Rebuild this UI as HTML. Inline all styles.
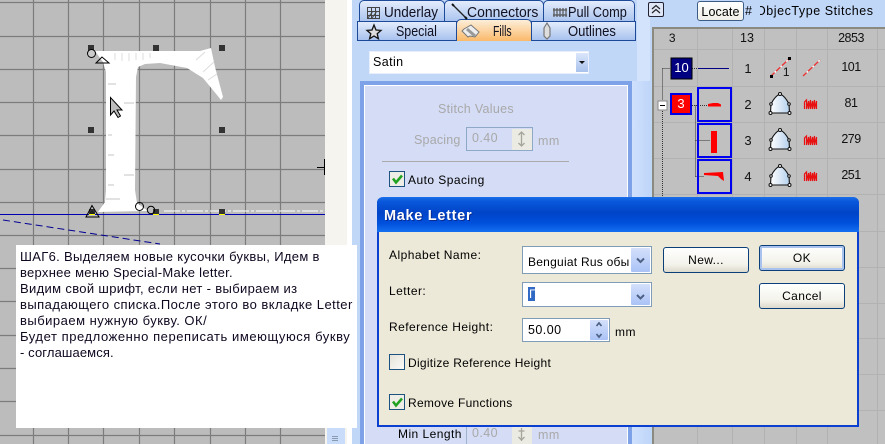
<!DOCTYPE html>
<html><head><meta charset="utf-8">
<style>
html,body{margin:0;padding:0}
body{width:885px;height:444px;overflow:hidden;position:relative;background:#c1d7f8;font-family:"Liberation Sans",sans-serif;font-size:12px;color:#111}
div,span{position:absolute;box-sizing:border-box;white-space:nowrap}
svg{position:absolute;left:0;top:0}
.tab{background:linear-gradient(#e3ecfc,#a8c2ee);border:1px solid #1d4a98;border-bottom:none;border-radius:5px 5px 0 0;font-size:15px;line-height:20px;color:#101020}
.tab span{transform-origin:0 50%}
.l{font-size:12px;letter-spacing:.45px;color:#000;line-height:14px}
.btn{background:linear-gradient(#fff,#f3f2ea 70%,#dcd9cc);border:1px solid #0a3f7a;border-radius:3px;text-align:center;font-size:12px;letter-spacing:.4px;line-height:24px;color:#000}
.box{background:#fff;border:1px solid #7f9db9}
.arr{background:linear-gradient(#d4e0fb,#aac3f6);border-radius:1px}
.dis{color:#a9a9a9;font-size:12px;letter-spacing:.4px}
.g{font-size:12px;letter-spacing:-.5px;color:#111;text-align:center;line-height:14px}
.n{left:20px;font-size:13px;line-height:16px;color:#100820;z-index:7}
</style></head><body>

<!-- left canvas -->
<div style="left:0;top:0;width:325px;height:444px;background:#bcbcbc"></div>
<div style="left:325px;top:0;width:22px;height:444px;background:#f6f4ef"></div>
<div style="left:347px;top:0;width:5px;height:444px;background:#fff"></div>
<div style="left:327px;top:427px;width:18px;height:17px;background:#c9dcfa"></div>
<svg width="885" height="444"><path d="M332 436.500h6M332 438.500h6M332 440.500h6" stroke="#8a9ab0"/></svg>

<svg width="885" height="444" style="z-index:1">
<g stroke="#7c7c7c" stroke-width="1.200">
<path d="M33.500 0V444M68.500 0V444M103.500 0V444M139.500 0V444M174.500 0V444M210.500 0V444M245.500 0V444M280.500 0V444"/>
<path d="M0 2.500H325M0 36.500H325M0 69.500H325M0 102.500H325M0 135.500H325M0 169.500H325M0 202.500H325M0 235.500H325M0 268.500H325M0 301.500H325M0 335.500H325M0 368.500H325M0 401.500H325M0 435.500H325"/>
</g>
<!-- letter -->
<path d="M95 51L200 51L211 48L215 67L223 97L221 100L217 95L203 78L187 68L160 63L145 64L138 67L136 77L135 190L137 203L148 211L98 212L105 202L106 190L106 72L103 62Z" fill="#fff"/>
<path d="M115 53V60M122 53V61M129 53V61M136 53V60M143 53V60M150 53V58M196 60L205 52M203 72L214 62M208 80L217 74" stroke="#dcdcdc" stroke-width="1" fill="none"/>
<path d="M108 84H116M124 103H134M108 135H112M108 155H114M124 175H134M108 185H114M106 199H120" stroke="#c4c4c4" stroke-width="1" fill="none"/>
<path d="M164 211H325" stroke="#fff" stroke-width="1" stroke-dasharray="16 2 3 2"/>
<path d="M0 214.500H325" stroke="#0000b0" stroke-width="1"/>
<path d="M3 220L160 244" stroke="#000090" stroke-width="1" stroke-dasharray="7 4"/>
<g fill="#333">
<rect x="88" y="45" width="6" height="6"/><rect x="153" y="45" width="6" height="6"/><rect x="219" y="45" width="6" height="6"/>
<rect x="88" y="127" width="6" height="6"/><rect x="219" y="127" width="6" height="6"/>
<rect x="153" y="209" width="6" height="5"/><rect x="219" y="209" width="6" height="5"/><rect x="89" y="209" width="6" height="5"/>
</g>
<path d="M89 214.500h6M153 214.500h6M219 214.500h6" stroke="#ff0" stroke-width="1"/>
<circle cx="91.500" cy="53.500" r="4" fill="#ccc" stroke="#000"/>
<circle cx="139.500" cy="206.500" r="4" fill="none" stroke="#000"/>
<circle cx="151" cy="210" r="3.700" fill="none" stroke="#000"/>
<path d="M102 57L96 63H109Z" fill="none" stroke="#000"/>
<path d="M92 205.500L86 217H99Z" fill="none" stroke="#000"/>
<path d="M92 209L89 214H95Z" fill="#222"/>
<path d="M110.500 97.500V115L114 111L118 117.500L120.500 116L117 110H122Z" fill="#bcbcbc" stroke="#000"/>
<path d="M317 167.500H324.500M324.500 159V175" stroke="#000" fill="none"/>
</svg>

<!-- tabs -->
<div class="tab" style="left:359px;top:0;width:86px;height:22px;z-index:2"><span style="left:24px;top:2px;transform:scaleX(.9)">Underlay</span></div>
<div class="tab" style="left:444px;top:0;width:100px;height:22px;z-index:2"><span style="left:22px;top:2px;transform:scaleX(.93)">Connectors</span></div>
<div class="tab" style="left:543px;top:0;width:92px;height:22px;z-index:2"><span style="left:24px;top:2px;transform:scaleX(.85)">Pull Comp</span></div>
<div class="tab" style="left:357px;top:21px;width:100px;height:20px;z-index:3;border-radius:0;border-bottom:1px solid #1d4a98"><span style="left:38px;top:0;transform:scaleX(.83)">Special</span></div>
<div class="tab" style="left:456px;top:19px;width:76px;height:22px;z-index:4;background:linear-gradient(#fdeeda,#fab969)"><span style="left:36px;top:2px;transform:scaleX(.7)">Fills</span></div>
<div class="tab" style="left:531px;top:21px;width:105px;height:20px;z-index:3;border-radius:0;border-bottom:1px solid #1d4a98"><span style="left:36px;top:0;transform:scaleX(.87)">Outlines</span></div>
<svg width="885" height="444" style="z-index:5">
<path d="M367.500 7.500h12v11h-12zM367.500 11.500h12M367.500 15.500h12M371.500 7.500v11M375.500 7.500v11M368 18l5-7M372 18l5-7" fill="none" stroke="#444" stroke-width="1"/>
<path d="M454 6L466 18" stroke="#222" stroke-width="1.300"/><path d="M452 4l2 2M465 17l2 2" stroke="#111" stroke-width="2"/>
<path d="M553 10h14M553 15h14M554 8v9M557 8v9M560 8v9M563 8v9M566 8v9" stroke="#555" stroke-width="1.200" fill="none"/>
<path d="M374 25l2 5 5 .4-3.800 3.300 1.200 5-4.400-2.700-4.400 2.700 1.200-5-3.800-3.300 5-.4z" fill="#ddd" stroke="#111" stroke-width="1.300"/>
<path d="M464 29l7-4 8 7-4 5-5-1-2 1-6-6z" fill="#eee" stroke="#777"/>
<path d="M467 29l8 7" stroke="#999" stroke-width="3"/>
<path d="M544 28l3-5 3 5v8l-3 3-3-3z" fill="#ddd" stroke="#777" stroke-width="1.200"/>
</svg>

<!-- dropdown -->
<div style="left:369px;top:51px;width:220px;height:23px;background:#fff;border:1px solid #e8eefc;padding-left:3px;line-height:21px;font-size:12.500px;letter-spacing:.4px;color:#000">Satin</div>
<div style="left:576px;top:53px;width:12px;height:19px;background:linear-gradient(#dbe6fb,#a9c2ec)"></div>
<div style="left:579px;top:61px;width:0;height:0;border:3px solid transparent;border-top:3px solid #111;border-bottom:0"></div>

<!-- panel -->
<div style="left:360px;top:81px;width:272px;height:363px;background:#d5dcf5;border:4px solid #7ea2e8;border-bottom:none"></div>
<div style="left:364px;top:85px;width:264px;height:359px;border:1px solid #fff;border-bottom:none"></div>
<div class="dis" style="left:438px;top:102px;font-size:12.500px;letter-spacing:.3px">Stitch Values</div>
<div class="dis" style="left:414px;top:133px;font-size:12.500px;letter-spacing:.2px">Spacing</div>
<div style="left:466px;top:127px;width:67px;height:24px;border:1px solid #8ea8c8;background:#d5dcf5"></div>
<div class="dis" style="left:472px;top:131px;font-size:12.500px">0.40</div>
<div style="left:512px;top:129px;width:20px;height:21px;background:#ecebe3"></div>
<div class="dis" style="left:538px;top:134px;font-size:12.500px">mm</div>
<svg width="885" height="444" style="z-index:1"><path d="M521.500 132v14M518.500 135l3-3 3 3M518.500 143l3 3 3-3" fill="none" stroke="#a5a59b" stroke-width="1.300"/></svg>
<div style="left:382px;top:161px;width:187px;height:1px;background:#aaa"></div>
<div style="left:389px;top:171px;width:16px;height:16px;background:#eeeee6;border:1px solid #1c5180"></div>
<svg width="885" height="444" style="z-index:1"><path d="M393 178.500l3 4 6-7" fill="none" stroke="#21a121" stroke-width="2.500"/></svg>
<div class="l" style="left:408px;top:173px">Auto Spacing</div>
<div class="l" style="left:398px;top:427px;z-index:1">Min Length</div>
<div style="left:466px;top:427px;width:1px;height:17px;background:#9fb3cf"></div>
<div class="dis" style="left:472px;top:426px;font-size:12.500px;z-index:1">0.40</div>
<div style="left:512px;top:427px;width:20px;height:17px;background:#ecebe3"></div>
<div class="dis" style="left:538px;top:428px;font-size:12.500px;z-index:1">mm</div>
<svg width="885" height="444" style="z-index:1"><path d="M521.500 428v13M518.500 431h6M518.500 437l3 3 3-3" fill="none" stroke="#a5a59b" stroke-width="1.300"/></svg>

<!-- right strip -->
<div style="left:632px;top:81px;width:18px;height:363px;background:linear-gradient(90deg,#cfe0fc,#bfd6f9)"></div>
<div style="left:637px;top:0;width:13px;height:81px;background:#d4e3fc"></div>
<div style="left:648px;top:2px;width:16px;height:15px;background:#dfe6f6;border:1px solid #223;border-radius:2px"></div>
<svg width="885" height="444" style="z-index:1"><path d="M652 9l4-3.500 4 3.500M652 13l4-3.500 4 3.500" fill="none" stroke="#222" stroke-width="1.200"/></svg>
<div class="btn" style="left:697px;top:1px;width:47px;height:20px;line-height:21px;background:linear-gradient(#fff,#f0efe8);border-color:#3b5c85;font-size:12.500px;letter-spacing:.1px;z-index:2">Locate</div>
<div style="left:745px;top:4px;font-size:12.500px;letter-spacing:.3px;color:#000">#</div>
<div style="left:760px;top:4px;width:116px;height:16px;overflow:hidden;color:#000"><span style="left:-4px;top:0;font-size:12.500px;letter-spacing:.55px">ObjecType Stitches</span></div>

<!-- grid -->
<div style="left:652px;top:27px;width:233px;height:417px;background:#c0c0c0;border-left:2px solid #8a8a80;border-top:2px solid #8a8a80"></div>
<svg width="885" height="444" style="z-index:1">
<g stroke="#b2b2b2" stroke-width="1"><path d="M697.500 29V444M732.500 29V444M764.500 29V444M796.500 29V444M827.500 29V444M877.500 29V444"/>
<path d="M654 49.500H885M654 86.500H885M654 122.500H885M654 158.500H885M654 194.500H885M654 231.500H885M654 267.500H885M654 303.500H885M654 338.500H885M654 374.500H885M654 410.500H885"/></g>
<g stroke="#333" stroke-width="1" stroke-dasharray="1 1" fill="none"><path d="M662.500 68.500H671M662.500 68.500V100M662.500 111V220M692 68.500H698M692 105.500H710M695.500 105.500V176.500M695.500 140.500H710M695.500 176.500H704"/></g>
<rect x="671" y="58" width="21" height="21" fill="#000080" stroke="#000"/>
<rect x="671" y="94" width="20" height="20" fill="#f00" stroke="#0000e6" stroke-width="2"/>
<rect x="658" y="101" width="9" height="9" fill="#fff" stroke="#888"/>
<path d="M660 105.500h5" stroke="#000"/>
<path d="M698 68.500H729" stroke="#000080" stroke-width="1"/>
<g fill="none" stroke="#0000f0" stroke-width="2"><rect x="698" y="88" width="33" height="33"/><rect x="698" y="124" width="33" height="33"/><rect x="698" y="160" width="33" height="33"/></g>
<path d="M708 104l5-1h5l3 1.500v2h-13z" fill="#f00"/>
<rect x="711" y="131" width="6" height="22" fill="#f00"/>
<path d="M704 173l19-1 1 9-3-2-3-3-14-1z" fill="#f00"/>
<!-- line icons -->
<path d="M771 76L789 59" stroke="#e33" stroke-width="1.300"/><path d="M771 76L789 59" stroke="#fff" stroke-width="1.400" stroke-dasharray="2 6" stroke-dashoffset="-5"/>
<rect x="770" y="75" width="3" height="3" fill="#000"/><rect x="788" y="57" width="3" height="3" fill="#000"/>
<path d="M803 76L820 60" stroke="#e33" stroke-width="1.300"/><path d="M803 76L820 60" stroke="#fff" stroke-width="1.400" stroke-dasharray="2 6" stroke-dashoffset="-5"/>
<defs><linearGradient id="sh" x1="0" x2="1"><stop offset="0" stop-color="#fff"/><stop offset="1" stop-color="#b4d0ec"/></linearGradient></defs>
<g fill="url(#sh)" stroke="#111" stroke-width="1.100">
<path d="M770.500 113L771 104Q775 96 780 94Q785 96 789 104L789.500 113Z"/>
<path d="M770.500 149L771 140Q775 132 780 130Q785 132 789 140L789.500 149Z"/>
<path d="M770.500 185L771 176Q775 168 780 166Q785 168 789 176L789.500 185Z"/></g>
<g fill="#fff" stroke="#111" stroke-width="1">
<circle cx="770.500" cy="113" r="1.500"/><circle cx="789.500" cy="113" r="1.500"/><circle cx="780" cy="94" r="1.500"/><circle cx="771" cy="104" r="1.300"/><circle cx="789" cy="104" r="1.300"/>
<circle cx="770.500" cy="149" r="1.500"/><circle cx="789.500" cy="149" r="1.500"/><circle cx="780" cy="130" r="1.500"/><circle cx="771" cy="140" r="1.300"/><circle cx="789" cy="140" r="1.300"/>
<circle cx="770.500" cy="185" r="1.500"/><circle cx="789.500" cy="185" r="1.500"/><circle cx="780" cy="166" r="1.500"/><circle cx="771" cy="176" r="1.300"/><circle cx="789" cy="176" r="1.300"/>
</g>
<g fill="none" stroke="#e81010" stroke-width="1.200">
<path d="M804.500 109V102L806.500 100V109L808.500 101V109L810.500 100V109L812.500 101V109L814.500 100V109L816.500 101V109"/>
<path d="M804.500 145V138L806.500 136V145L808.500 137V145L810.500 136V145L812.500 137V145L814.500 136V145L816.500 137V145"/>
<path d="M804.500 181V174L806.500 172V181L808.500 173V181L810.500 172V181L812.500 173V181L814.500 172V181L816.500 173V181"/>
</g>
</svg>
<div class="g" style="left:662px;top:31px;width:20px;z-index:1">3</div>
<div class="g" style="left:732px;top:31px;width:30px;z-index:1;font-size:12.500px;letter-spacing:0">13</div>
<div class="g" style="left:831px;top:31px;width:40px;z-index:1;font-size:12.500px">2853</div>
<div class="g" style="left:671px;top:61px;width:21px;color:#fff;font-size:13px;letter-spacing:0;z-index:2">10</div>
<div class="g" style="left:671px;top:97px;width:20px;color:#fff;font-size:13px;letter-spacing:0;z-index:2">3</div>
<div class="g" style="left:738px;top:62px;width:20px;font-size:13px;letter-spacing:0;z-index:1">1</div>
<div class="g" style="left:738px;top:98px;width:20px;font-size:13px;letter-spacing:0;z-index:1">2</div>
<div class="g" style="left:738px;top:134px;width:20px;font-size:13px;letter-spacing:0;z-index:1">3</div>
<div class="g" style="left:738px;top:170px;width:20px;font-size:13px;letter-spacing:0;z-index:1">4</div>
<div class="g" style="left:779px;top:65px;width:14px;z-index:1">1</div>
<div class="g" style="left:831px;top:60px;width:40px;z-index:1;font-size:12.500px">101</div>
<div class="g" style="left:831px;top:96px;width:40px;z-index:1;font-size:12.500px">81</div>
<div class="g" style="left:831px;top:132px;width:40px;z-index:1;font-size:12.500px">279</div>
<div class="g" style="left:831px;top:168px;width:40px;z-index:1;font-size:12.500px">251</div>

<!-- text note -->
<div style="left:16px;top:245px;width:341px;height:183px;background:#fff;z-index:6"></div>
<div class="n" style="top:249px;letter-spacing:.33px">ШАГ6. Выделяем новые кусочки буквы, Идем в</div>
<div class="n" style="top:265px;letter-spacing:.28px">верхнее меню Special-Make letter.</div>
<div class="n" style="top:281px;letter-spacing:.34px">Видим свой шрифт, если нет - выбираем из</div>
<div class="n" style="top:297px;letter-spacing:.45px">выпадающего списка.После этого во вкладке Letter</div>
<div class="n" style="top:313px;letter-spacing:.49px">выбираем нужную букву. ОК/</div>
<div class="n" style="top:329px;letter-spacing:.56px">Будет предложенно переписать имеющуюся букву</div>
<div class="n" style="top:345px;letter-spacing:.12px">- соглашаемся.</div>

<!-- dialog -->
<div style="left:377px;top:197px;width:482px;height:230px;background:#ece9d8;border:2px solid #0a3fd0;border-top:none;border-radius:6px 6px 0 0;z-index:8"></div>
<div style="left:377px;top:197px;width:482px;height:35px;background:linear-gradient(#1a6fe8 0,#0a58dc 12%,#0044c8 45%,#0050dc 75%,#1570f0 100%);border-radius:6px 6px 0 0;z-index:9;padding:11px 0 0 7px;color:#fff;font-weight:bold;font-size:14.500px;line-height:17px;letter-spacing:.7px;text-shadow:1px 1px 0 #0a2a90">Make Letter</div>
<div style="z-index:10;left:0;top:0;width:885px;height:444px">
<div class="l" style="left:389px;top:248px">Alphabet Name:</div>
<div class="box" style="left:522px;top:246px;width:130px;height:28px"></div>
<div class="l" style="left:528px;top:255px;letter-spacing:.25px">Benguiat Rus обы</div>
<div class="arr" style="left:631px;top:248px;width:19px;height:24px"></div>
<div class="l" style="left:389px;top:284px">Letter:</div>
<div class="box" style="left:522px;top:282px;width:130px;height:25px"></div>
<div style="left:528px;top:287px;width:7px;height:14px;background:#316ac5;color:#fff;font-size:12px;line-height:14px;padding-left:1px">Г</div>
<div class="arr" style="left:631px;top:284px;width:19px;height:21px"></div>
<div class="l" style="left:389px;top:320px">Reference Height:</div>
<div class="box" style="left:522px;top:318px;width:88px;height:24px"></div>
<div class="l" style="left:528px;top:323px;font-size:12.500px">50.00</div>
<div class="arr" style="left:590px;top:320px;width:18px;height:20px"></div>
<div class="l" style="left:615px;top:325px">mm</div>
<div style="left:389px;top:354px;width:16px;height:16px;background:linear-gradient(135deg,#e4e2d8,#fbfbf8);border:1px solid #1c5180"></div>
<div class="l" style="left:408px;top:356px;letter-spacing:.28px">Digitize Reference Height</div>
<div style="left:389px;top:394px;width:16px;height:16px;background:#eeeee6;border:1px solid #1c5180"></div>
<div class="l" style="left:408px;top:396px;letter-spacing:.28px">Remove Functions</div>
<svg width="885" height="444"><path d="M637 258.500l3.500 3.500 3.500-3.500M637 295l3.500 3.500 3.500-3.500" fill="none" stroke="#4d6185" stroke-width="2"/><path d="M596.500 326l2.500-3 2.500 3M596.500 334l2.500 3 2.500-3" fill="none" stroke="#4d6185" stroke-width="1.700"/><path d="M393 401.500l3 4 6-7" fill="none" stroke="#21a121" stroke-width="2.500"/></svg>
<div class="btn" style="left:663px;top:247px;width:86px;height:26px">New...</div>
<div class="btn" style="left:759px;top:245px;width:86px;height:26px;box-shadow:inset 0 0 0 2px #a9c3ee">OK</div>
<div class="btn" style="left:759px;top:283px;width:86px;height:26px">Cancel</div>
</div>
</body></html>
